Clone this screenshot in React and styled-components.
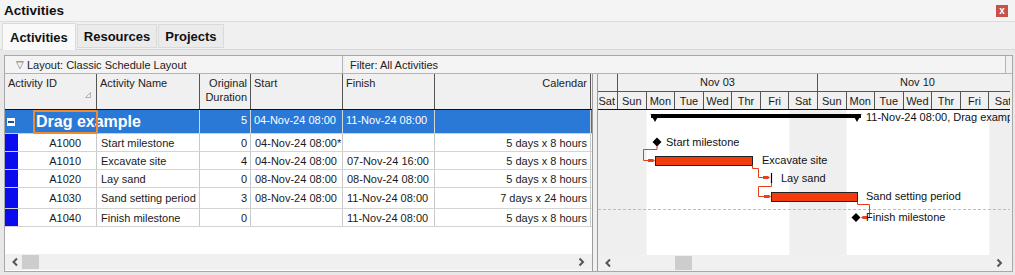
import styled, { createGlobalStyle } from 'styled-components';

const GlobalStyle = createGlobalStyle`
  html, body {
    margin: 0;
    padding: 0;
    background: #f0f0f0;
  }
  body {
    font-family: "Liberation Sans", Arial, sans-serif;
    font-size: 11px;
    color: #1a1a1a;
  }
`;

const COLS = '92px 103px 51px 92px 92px 156px';
const DAY = 200 / 7;

const rows = [
  { id: 'A1000', name: 'Start milestone', dur: '0', start: '04-Nov-24 08:00*', finish: '', cal: '5 days x 8 hours', h: 18 },
  { id: 'A1010', name: 'Excavate site', dur: '4', start: '04-Nov-24 08:00', finish: '07-Nov-24 16:00', cal: '5 days x 8 hours', h: 18 },
  { id: 'A1020', name: 'Lay sand', dur: '0', start: '08-Nov-24 08:00', finish: '08-Nov-24 08:00', cal: '5 days x 8 hours', h: 18 },
  { id: 'A1030', name: 'Sand setting period', dur: '3', start: '08-Nov-24 08:00', finish: '11-Nov-24 08:00', cal: '7 days x 24 hours', h: 21 },
  { id: 'A1040', name: 'Finish milestone', dur: '0', start: '', finish: '11-Nov-24 08:00', cal: '5 days x 8 hours', h: 18 },
];

const days = ['Sun', 'Mon', 'Tue', 'Wed', 'Thr', 'Fri', 'Sat', 'Sun', 'Mon', 'Tue', 'Wed', 'Thr', 'Fri', 'Sat'];

function Chevron({ dir }) {
  const d = dir === 'left' ? 'M6 1.5 L2.5 5 L6 8.5' : 'M2.5 1.5 L6 5 L2.5 8.5';
  return (
    <svg width="9" height="10" viewBox="0 0 9 10">
      <path d={d} fill="none" stroke="#555" strokeWidth="2" />
    </svg>
  );
}

function App() {
  return (
    <Window>
      <GlobalStyle />
      <TitleBar>
        <TitleText>Activities</TitleText>
        <CloseButton>x</CloseButton>
      </TitleBar>
      <TabStrip>
        <Tab $active>Activities</Tab>
        <Tab>Resources</Tab>
        <Tab>Projects</Tab>
      </TabStrip>
      <Content>
        <Panel>
          <InfoRow>
            <InfoBar $width={338}>
              <Caret>▽</Caret>Layout: Classic Schedule Layout
            </InfoBar>
            <InfoBar $width={661}>Filter: All Activities</InfoBar>
          </InfoRow>
          <Split>
            <TablePane>
              <HeaderRow>
                <HeadCell>
                  Activity ID
                  <SortMark viewBox="0 0 6 6" width="6" height="6">
                    <path d="M5.5 0.5 L5.5 5.5 L0.5 5.5 Z" fill="none" stroke="#b0b0b0" />
                  </SortMark>
                </HeadCell>
                <HeadCell>Activity Name</HeadCell>
                <HeadCell $align="right">
                  Original
                  <br />
                  Duration
                </HeadCell>
                <HeadCell>Start</HeadCell>
                <HeadCell>Finish</HeadCell>
                <HeadCell $align="right">Calendar</HeadCell>
              </HeaderRow>
              <GroupRow>
                <GroupName>
                  <Toggle>
                    <span />
                  </Toggle>
                  <Focus />
                  <GroupTitle>Drag example</GroupTitle>
                </GroupName>
                <GroupCell $align="right">5</GroupCell>
                <GroupCell>04-Nov-24 08:00</GroupCell>
                <GroupCell>11-Nov-24 08:00</GroupCell>
                <GroupCell />
              </GroupRow>
              {rows.map((r) => (
                <Row key={r.id} $h={r.h}>
                  <IdCell>
                    <Strip />
                    <IdText>{r.id}</IdText>
                  </IdCell>
                  <Cell>{r.name}</Cell>
                  <Cell $align="right">{r.dur}</Cell>
                  <Cell>{r.start}</Cell>
                  <Cell>{r.finish}</Cell>
                  <Cell $align="right">{r.cal}</Cell>
                </Row>
              ))}
              <Filler />
              <ScrollBar>
                <Arrow>
                  <Chevron dir="left" />
                </Arrow>
                <Thumb $left={1} />
                <Spacer />
                <Arrow>
                  <Chevron dir="right" />
                </Arrow>
              </ScrollBar>
            </TablePane>
            <Divider />
            <GanttPane>
              <GanttHeader>
                <MonthRow>
                  <MonthCell $w={20} />
                  <MonthCell $w={200}>Nov 03</MonthCell>
                  <MonthCell $w={200}>Nov 10</MonthCell>
                </MonthRow>
                <DayRow>
                  <DayCell $w={20} $clip>Sat</DayCell>
                  {days.map((d, i) => (
                    <DayCell key={i} $w={DAY}>
                      {d}
                    </DayCell>
                  ))}
                </DayRow>
              </GanttHeader>
              <GanttChart />
              <ScrollBar>
                <Arrow>
                  <Chevron dir="left" />
                </Arrow>
                <Thumb $left={61} />
                <Spacer />
                <Arrow>
                  <Chevron dir="right" />
                </Arrow>
              </ScrollBar>
            </GanttPane>
          </Split>
        </Panel>
      </Content>
    </Window>
  );
}

function LinkArrow({ x, y, dir = 1 }) {
  const tip = x;
  const back = x - dir * 7;
  return (
    <polygon
      points={`${back},${y - 1.5} ${tip - dir * 2},${y - 1.5} ${tip},${y} ${tip - dir * 2},${y + 1.5} ${back},${y + 1.5}`}
      fill="#e8401c"
    />
  );
}

function GanttChart() {
  const link = { fill: 'none', stroke: '#e8401c', strokeWidth: 1 };
  const label = { fontSize: 11, fill: '#111', dominantBaseline: 'central', fontFamily: '"Liberation Sans", Arial, sans-serif' };
  return (
    <ChartSvg width="412" height="145" viewBox="0 0 412 145">
      <rect x="0" y="0" width="412" height="145" fill="#fff" />
      <rect x="0" y="0" width={DAY * 1 + 20} height="145" fill="#efefef" />
      <rect x={20 + DAY * 6} y="0" width={DAY * 2} height="145" fill="#efefef" />
      <rect x={20 + DAY * 13} y="0" width={DAY * 2} height="145" fill="#efefef" />

      <rect x="53" y="4" width="210" height="4" fill="#000" />
      <polygon points="52.5,4 61.5,4 57,12" fill="#000" />
      <polygon points="254.5,4 263.5,4 259,12" fill="#000" />
      <text x="268" y="7" style={label}>11-Nov-24 08:00, Drag example</text>

      <polygon points="59,27.5 63.5,32 59,36.5 54.5,32" fill="#000" />
      <text x="68" y="32" style={label}>Start milestone</text>

      <path d="M59 36 V39.5 H45.5 V50.5 H56" {...link} />
      <LinkArrow x={57} y={50.5} />
      <rect x="57.5" y="46.5" width="97" height="9" fill="#f23c0e" stroke="#222" />
      <text x="164" y="50" style={label}>Excavate site</text>

      <path d="M154.5 55.5 V58.5 H160.5 V67.5 H171" {...link} />
      <LinkArrow x={172} y={67.5} />
      <line x1="173.5" y1="63" x2="173.5" y2="73" stroke="#000" strokeWidth="1.2" />
      <text x="183" y="68" style={label}>Lay sand</text>

      <path d="M173.5 73 V76.5 H160.5 V86.5 H172" {...link} />
      <LinkArrow x={173} y={86.5} />
      <rect x="173.5" y="82.5" width="86" height="9" fill="#f23c0e" stroke="#222" />
      <text x="268" y="86" style={label}>Sand setting period</text>

      <line x1="0" y1="99.5" x2="412" y2="99.5" stroke="#bdbdbd" strokeDasharray="3 2" />

      <path d="M259.5 91.5 V94.5 H271.5 V107.5 H266" {...link} />
      <LinkArrow x={263} y={107.5} dir={-1} />
      <polygon points="258,103 262.5,107.5 258,112 253.5,107.5" fill="#000" />
      <text x="268" y="107" style={label}>Finish milestone</text>
    </ChartSvg>
  );
}

export default App;

const Window = styled.div`
  width: 1015px;
  height: 275px;
  overflow: hidden;
  background: #f0f0f0;
  display: flex;
  flex-direction: column;
`;

const TitleBar = styled.div`
  height: 21px;
  display: flex;
  align-items: center;
  justify-content: space-between;
  padding: 0 7px 0 4px;
  border-bottom: 1px solid #dcdcdc;
  background: #f4f4f4;
`;

const TitleText = styled.div`
  font-weight: 700;
  font-size: 13.5px;
  color: #111;
`;

const CloseButton = styled.div`
  width: 12px;
  height: 12px;
  background: #c7524b;
  color: #fff;
  font-size: 10px;
  font-weight: 700;
  line-height: 11px;
  text-align: center;
`;

const TabStrip = styled.div`
  height: 27px;
  display: flex;
  align-items: flex-end;
  gap: 1px;
  padding-left: 2px;
  background: #f0f0f0;
  border-bottom: 1px solid #d8d8d8;
`;

const Tab = styled.div`
  height: ${(p) => (p.$active ? 26 : 22)}px;
  margin-bottom: ${(p) => (p.$active ? -1 : 1)}px;
  padding: 0 ${(p) => (p.$active ? 7 : 6)}px;
  display: flex;
  align-items: center;
  font-weight: 700;
  font-size: 13px;
  color: #111;
  background: ${(p) => (p.$active ? '#f9f9f9' : '#ebebeb')};
  border: 1px solid #dadada;
  border-bottom: ${(p) => (p.$active ? 'none' : '1px solid #dadada')};
  position: relative;
  z-index: ${(p) => (p.$active ? 1 : 0)};
`;

const Content = styled.div`
  flex: 1;
  padding: 5px 4px 0 4px;
  background: #e8e8e8;
`;

const Panel = styled.div`
  width: 1007px;
  border: 1px solid #a8a8a8;
  background: #f0f0f0;
  display: flex;
  flex-direction: column;
`;

const InfoRow = styled.div`
  height: 17px;
  display: flex;
  gap: 2px;
  border-bottom: 1px solid #b4b4b4;
`;

const InfoBar = styled.div`
  width: ${(p) => p.$width}px;
  box-sizing: border-box;
  height: 17px;
  display: flex;
  align-items: center;
  padding-left: 5px;
  font-size: 11px;
  color: #222;
  background: #f4f4f4;
  border-right: 1px solid #b4b4b4;
`;

const Caret = styled.span`
  font-size: 10px;
  color: #555;
  margin: 0 3px 0 6px;
`;

const Split = styled.div`
  display: flex;
`;

const TablePane = styled.div`
  width: 587px;
  display: flex;
  flex-direction: column;
  background: #fff;
`;

const HeaderRow = styled.div`
  display: grid;
  grid-template-columns: ${COLS};
  height: 36px;
  box-sizing: border-box;
  border-bottom: 1px solid #111;
  background: #f0f0f0;
`;

const HeadCell = styled.div`
  position: relative;
  padding: 2px 3px 0 3px;
  text-align: ${(p) => p.$align || 'left'};
  line-height: 14px;
  font-size: 11px;
  color: #222;
  border-right: 1px solid #555;
`;

const SortMark = styled.svg`
  position: absolute;
  right: 5px;
  bottom: 11px;
`;

const GroupRow = styled.div`
  display: grid;
  grid-template-columns: 195px 51px 92px 92px 156px;
  height: 24px;
  box-sizing: border-box;
  border-bottom: 1px solid #cfcfcf;
  background: #2a79d7;
  color: #fff;
`;

const GroupName = styled.div`
  position: relative;
  display: flex;
  align-items: center;
  border-right: 1px solid #d6d6d6;
`;

const Toggle = styled.div`
  width: 8px;
  height: 8px;
  margin-left: 2px;
  background: #fff;
  display: flex;
  align-items: center;
  justify-content: center;

  span {
    width: 6px;
    height: 2px;
    background: #1b4f8f;
  }
`;

const Focus = styled.div`
  position: absolute;
  left: 28px;
  top: 0;
  width: 61px;
  height: 20px;
  border: 2px solid #f08a2c;
  border-radius: 1px;
`;

const GroupTitle = styled.span`
  margin-left: 21px;
  font-size: 16px;
  font-weight: 700;
  white-space: nowrap;
`;

const GroupCell = styled.div`
  display: flex;
  align-items: center;
  justify-content: ${(p) => (p.$align === 'right' ? 'flex-end' : 'flex-start')};
  padding: 0 3px 4px 3px;
  font-size: 11px;
  border-right: 1px solid #d6d6d6;
`;

const Row = styled.div`
  display: grid;
  grid-template-columns: ${COLS};
  height: ${(p) => p.$h}px;
  box-sizing: border-box;
  border-bottom: 1px solid #d4d4d4;
`;

const Cell = styled.div`
  display: flex;
  align-items: center;
  justify-content: ${(p) => (p.$align === 'right' ? 'flex-end' : 'flex-start')};
  padding: 0 3px 0 4px;
  white-space: nowrap;
  overflow: hidden;
  border-right: 1px solid #c8c8c8;
`;

const IdCell = styled.div`
  display: flex;
  border-right: 1px solid #c8c8c8;
`;

const Strip = styled.div`
  width: 13px;
  background: #0b0bef;
`;

const IdText = styled.div`
  flex: 1;
  display: flex;
  align-items: center;
  justify-content: flex-end;
  padding-right: 15px;
`;

const Filler = styled.div`
  height: 27px;
  background: #fff;
`;

const ScrollBar = styled.div`
  height: 16px;
  display: flex;
  align-items: center;
  background: #f0f0f0;
  padding: 0 5px;
`;

const Arrow = styled.div`
  width: 11px;
  height: 16px;
  display: flex;
  align-items: center;
  justify-content: center;
`;

const Thumb = styled.div`
  width: 17px;
  height: 14px;
  margin-left: ${(p) => p.$left}px;
  background: #cdcdcd;
`;

const Spacer = styled.div`
  flex: 1;
`;

const Divider = styled.div`
  width: 4px;
  background: #f0f0f0;
  border-left: 1px solid #9c9c9c;
  border-right: 1px solid #9c9c9c;
`;

const GanttPane = styled.div`
  width: 412px;
  display: flex;
  flex-direction: column;
  overflow: hidden;
  background: #fff;
`;

const GanttHeader = styled.div`
  height: 36px;
  box-sizing: border-box;
  background: #f0f0f0;
  border-bottom: 1px solid #111;
  display: flex;
  flex-direction: column;
`;

const MonthRow = styled.div`
  height: 17px;
  display: flex;
  border-bottom: 1px solid #555;
`;

const MonthCell = styled.div`
  flex: none;
  width: ${(p) => p.$w}px;
  box-sizing: border-box;
  text-align: center;
  line-height: 17px;
  border-right: 1px solid #555;
`;

const DayRow = styled.div`
  flex: 1;
  display: flex;
`;

const DayCell = styled.div`
  flex: none;
  width: ${(p) => p.$w}px;
  box-sizing: border-box;
  display: flex;
  align-items: center;
  justify-content: ${(p) => (p.$clip ? 'flex-end' : 'center')};
  overflow: hidden;
  white-space: nowrap;
  padding-right: ${(p) => (p.$clip ? 2 : 0)}px;
  border-right: 1px solid #555;
`;

const ChartSvg = styled.svg`
  display: block;
`;
